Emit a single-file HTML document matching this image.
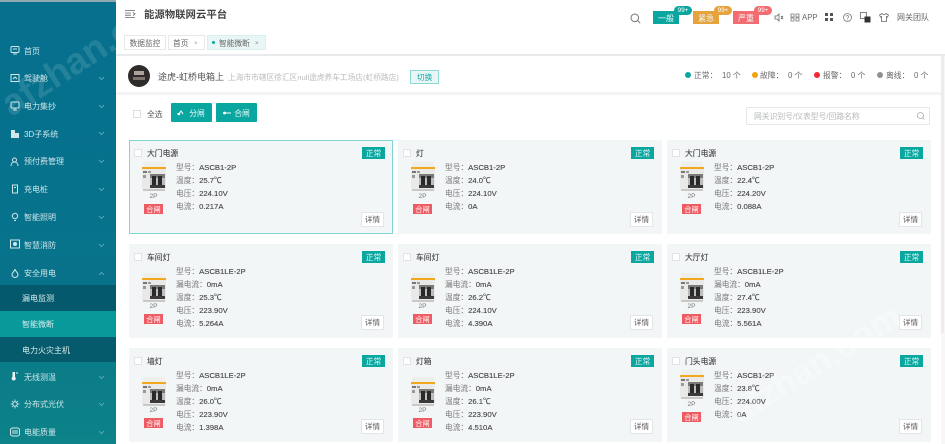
<!DOCTYPE html>
<html lang="zh"><head><meta charset="utf-8">
<style>
*{box-sizing:border-box;margin:0;padding:0}
html{background:#fff}
html,body{width:945px;height:444px;overflow:hidden;font-family:"Liberation Sans","Noto Sans CJK SC",sans-serif;color:#555}
body{background:#fff;filter:blur(.35px)}
.a{position:absolute;white-space:nowrap}
#side{position:absolute;left:0;top:0;width:116px;height:444px;background:linear-gradient(180deg,#06708e 0%,#07728c 50%,#0d8288 100%);overflow:hidden}
#side .m{position:absolute;left:24px;font-size:8px;color:#cfe6ea;white-space:nowrap;line-height:12px;margin-top:1px}
#side svg.i{position:absolute;left:10px;width:10px;height:10px}
#side svg.c{position:absolute;left:98px;width:7px;height:5px}
.band{position:absolute;left:0;width:116px}
.sub{position:absolute;left:22px;font-size:8px;color:#d8ecee;line-height:12px;white-space:nowrap;margin-top:1px}
.card{position:absolute;width:264px;background:#f2f6f7}
.card.sel{box-shadow:inset 0 0 0 1px #7fd6d2}
.ck{position:absolute;left:5px;top:9px;width:8px;height:8px;background:#fff;border:1px solid #dfe2e6;border-radius:1px}
.t{position:absolute;left:18px;top:8px;font-size:7.8px;color:#3f3f3f;line-height:12px;white-space:nowrap;-webkit-text-stroke:.1px #3f3f3f}
.st{position:absolute;left:233px;top:7px;width:23px;height:12px;background:#0aa7a0;color:#e6f7f6;font-size:7.8px;line-height:13px;text-align:center}
.img{position:absolute;left:13px;top:22px;width:24px;height:29px}
.img.r{top:29px;height:30px}
.p2{position:absolute;left:12px;width:25px;text-align:center;font-size:6.5px;color:#777;line-height:9px}
.he{position:absolute;left:15px;width:19px;height:10px;background:#ee5b62;color:#fff;font-size:7.2px;line-height:11px;text-align:center}
.l{position:absolute;left:47px;font-size:7.7px;line-height:12px;color:#444;white-space:nowrap;-webkit-text-stroke:.12px #444;margin-top:1px}
.l b{font-weight:400;color:#777;-webkit-text-stroke:0}
.d{position:absolute;left:232px;width:23px;height:15px;background:#fff;border:1px solid #e3e6e8;font-size:7.6px;line-height:13px;text-align:center;color:#555}
.wm{position:absolute;font-family:"Liberation Sans",sans-serif;font-weight:700;white-space:nowrap;transform-origin:left bottom;line-height:40px}
.dot{position:absolute;width:6px;height:6px;border-radius:50%;top:72px}
.s{position:absolute;top:70px;font-size:7.8px;line-height:12px;color:#666;white-space:nowrap}
.bd{position:absolute;top:11px;height:13px;width:26px;color:#f2fbfb;font-size:8px;line-height:15px;text-align:center}
.nn{position:absolute;top:6px;width:18px;height:9px;border-radius:5px;color:#fff;font-size:6.2px;line-height:9px;text-align:center}
.tb{position:absolute;top:35px;height:15px;border:1px solid #e6e8ea;font-size:7.7px;line-height:15px;color:#666;text-align:center;white-space:nowrap}
.gb{position:absolute;top:103px;width:41px;height:19px;background:#0aa7a0;color:#eafafa;font-size:7.8px;line-height:21px;text-align:center;border-radius:1px}
</style></head><body>
<svg width="0" height="0" style="position:absolute"><defs>
<symbol id="br" viewBox="0 0 24 29" preserveAspectRatio="none">
<rect x="1" y="0" width="22" height="5" fill="#eeeeeb"/>
<rect x="0" y="5" width="24" height="2" fill="#f2a81d"/>
<rect x="0" y="7" width="24" height="20" fill="#e9e9e7"/>
<rect x="1" y="9" width="4" height="2" fill="#777"/>
<rect x="6" y="9" width="3" height="2" fill="#999"/>
<rect x="1" y="13" width="3" height="3" fill="#999"/>
<rect x="8" y="12" width="15" height="4" fill="#7a7a7a"/>
<rect x="8" y="16" width="15" height="7" fill="#bdbdbd"/>
<rect x="10" y="14" width="4" height="9" fill="#2a2a2a"/>
<rect x="16" y="14" width="4" height="9" fill="#2a2a2a"/>
<rect x="8" y="23" width="15" height="3" fill="#3a3a3a"/>
<rect x="1" y="27" width="22" height="2" fill="#c8c8c6"/>
</symbol>
<symbol id="chd" viewBox="0 0 7 5"><path d="M1 1l2.500 2.500L6 1" fill="none" stroke="#6fb0bf" stroke-width=".8"/></symbol>
</defs></svg>

<div id="side">
<div class="band" style="top:0;height:2px;background:#8fa9b0"></div>
<div class="band" style="top:258px;height:27px;background:#077289"></div>
<div class="band" style="top:285px;height:26px;background:#05596c"></div>
<div class="band" style="top:311px;height:26px;background:#089a9b"></div>
<div class="band" style="top:337px;height:25px;background:#055b6b"></div>

<svg class="i" style="top:45px" viewBox="0 0 10 10"><rect x="1" y="1.500" width="8" height="6" rx="1" fill="none" stroke="#cfe6ea"/><path d="M3 4h4M3 9h4" stroke="#cfe6ea"/></svg><div class="m" style="top:45px">首页</div>
<svg class="i" style="top:73px" viewBox="0 0 10 10"><rect x="1" y="1.500" width="8" height="7" fill="none" stroke="#cfe6ea"/><path d="M3 6l2-2 2 2" fill="none" stroke="#cfe6ea"/></svg><div class="m" style="top:72px">驾驶舱</div><svg class="c" style="top:76px"><use href="#chd"/></svg>
<svg class="i" style="top:101px" viewBox="0 0 10 10"><rect x="1" y="1" width="8" height="6" rx="1" fill="none" stroke="#cfe6ea"/><path d="M3 9h4M5 7v2" stroke="#cfe6ea"/></svg><div class="m" style="top:100px">电力集抄</div><svg class="c" style="top:104px"><use href="#chd"/></svg>
<svg class="i" style="top:129px" viewBox="0 0 10 10"><path d="M1 9V1h4v8zM5 9V4h4v5z" fill="#cfe6ea"/></svg><div class="m" style="top:128px">3D子系统</div><svg class="c" style="top:131px"><use href="#chd"/></svg>
<svg class="i" style="top:157px" viewBox="0 0 10 10"><circle cx="4.500" cy="3" r="2" fill="none" stroke="#cfe6ea"/><path d="M1 9c0-3 2-4 3.500-4S8 6 8 9" fill="none" stroke="#cfe6ea"/></svg><div class="m" style="top:155px">预付费管理</div><svg class="c" style="top:159px"><use href="#chd"/></svg>
<svg class="i" style="top:184px" viewBox="0 0 10 10"><rect x="2.500" y="1" width="5" height="8" fill="none" stroke="#cfe6ea"/><path d="M4 3.500h2" stroke="#cfe6ea"/></svg><div class="m" style="top:183px">充电桩</div><svg class="c" style="top:187px"><use href="#chd"/></svg>
<svg class="i" style="top:212px" viewBox="0 0 10 10"><circle cx="5" cy="4" r="2.700" fill="none" stroke="#cfe6ea"/><path d="M4 8.500h2" stroke="#cfe6ea"/></svg><div class="m" style="top:211px">智能照明</div><svg class="c" style="top:215px"><use href="#chd"/></svg>
<svg class="i" style="top:239px" viewBox="0 0 10 10"><rect x=".5" y="1" width="9" height="8" fill="none" stroke="#cfe6ea"/><circle cx="5" cy="5" r="2" fill="#cfe6ea"/></svg><div class="m" style="top:239px">智慧消防</div><svg class="c" style="top:243px"><use href="#chd"/></svg>
<svg class="i" style="top:268px" viewBox="0 0 10 10"><path d="M5 1C5 3 2 4.500 2 6.500a3 3 0 006 0C8 4.500 5 3 5 1z" fill="none" stroke="#cfe6ea"/></svg><div class="m" style="top:267px">安全用电</div><svg class="c" style="top:271px;transform:scaleY(-1)"><use href="#chd"/></svg>
<div class="sub" style="top:292px">漏电监测</div>
<div class="sub" style="top:318px">智能微断</div>
<div class="sub" style="top:344px">电力火灾主机</div>
<svg class="i" style="top:371px" viewBox="0 0 10 10"><rect x="2.500" y="1" width="2.500" height="6" fill="#e8f4f4"/><circle cx="3.700" cy="7.500" r="2" fill="#e8f4f4"/><path d="M6 2h2" stroke="#e8f4f4"/></svg><div class="m" style="top:371px">无线测温</div><svg class="c" style="top:375px"><use href="#chd"/></svg>
<svg class="i" style="top:399px" viewBox="0 0 10 10"><circle cx="5" cy="5" r="2.200" fill="none" stroke="#cfe6ea"/><path d="M5 .5v2M5 7.500v2M.5 5h2M7.500 5h2M2 2l1.400 1.400M6.600 6.600L8 8M8 2L6.600 3.400M3.400 6.600L2 8" stroke="#cfe6ea" stroke-width=".8"/></svg><div class="m" style="top:398px">分布式光伏</div><svg class="c" style="top:402px"><use href="#chd"/></svg>
<svg class="i" style="top:427px" viewBox="0 0 10 10"><rect x=".5" y="1" width="9" height="8" rx="2" fill="none" stroke="#cfe6ea"/><path d="M3 3v4M5 3v4M7 3v4" stroke="#cfe6ea"/></svg><div class="m" style="top:426px">电能质量</div><svg class="c" style="top:430px"><use href="#chd"/></svg>
<div class="wm" style="left:16px;top:84px;font-size:37px;color:rgba(255,255,255,.12);transform:rotate(-33deg)">afzhan.com</div>
</div>

<!-- top bar -->
<svg class="a" style="left:125px;top:10px;width:11px;height:8px" viewBox="0 0 11 8"><path d="M0 .5h10M0 3h6M0 5.200h6M0 7.500h10M8 2.500l2 1.500-2 1.500" fill="none" stroke="#666" stroke-width=".8"/></svg>
<div class="a" style="left:144px;top:9px;font-size:10.400px;line-height:14px;color:#444;font-weight:700">能源物联网云平台</div>

<svg class="a" style="left:630px;top:13px;width:11px;height:11px" viewBox="0 0 11 11"><circle cx="4.800" cy="4.800" r="3.800" fill="none" stroke="#777"/><path d="M7.700 7.700L10.200 10.200" stroke="#777"/></svg>
<div class="bd" style="left:653px;background:#0aa7a0">一般</div><div class="nn" style="left:674px;background:#0aa7a0">99+</div>
<div class="bd" style="left:693px;background:#e6a23c">紧急</div><div class="nn" style="left:714px;background:#e6a23c">99+</div>
<div class="bd" style="left:733px;background:#f26c72">严重</div><div class="nn" style="left:754px;background:#f26c72">99+</div>
<svg class="a" style="left:774px;top:13px;width:10px;height:9px" viewBox="0 0 10 9"><path d="M1 3h2l2-2v7L3 6H1zM7 3l2 3M9 3L7 6" fill="none" stroke="#666" stroke-width=".8"/></svg>
<svg class="a" style="left:790px;top:13px;width:10px;height:9px" viewBox="0 0 10 9"><path d="M1 1h3v3H1zM6 1h3v3H6zM1 5h3v3H1zM6 5h3v3H6z" fill="none" stroke="#777" stroke-width=".8"/></svg>
<div class="a" style="left:802px;top:12px;font-size:7.800px;line-height:12px;color:#666">APP</div>
<svg class="a" style="left:825px;top:13px;width:8px;height:8px" viewBox="0 0 8 8"><path d="M0 0h3v3H0zM5 0h3v3H5zM0 5h3v3H0zM5 5h3v3H5z" fill="#555"/></svg>
<svg class="a" style="left:843px;top:13px;width:9px;height:9px" viewBox="0 0 9 9"><circle cx="4.500" cy="4.500" r="4" fill="none" stroke="#777" stroke-width=".8"/><path d="M3.300 3.500a1.200 1.200 0 112 1c-.5.300-.8.500-.8 1.200M4.500 6.500v.8" fill="none" stroke="#777" stroke-width=".7"/></svg>
<svg class="a" style="left:860px;top:12px;width:11px;height:11px" viewBox="0 0 11 11"><rect x=".5" y=".5" width="6" height="6" fill="#fff" stroke="#666" stroke-width=".8"/><rect x="4.500" y="4.500" width="6" height="6" fill="#333"/></svg>
<svg class="a" style="left:879px;top:13px;width:10px;height:9px" viewBox="0 0 10 9"><path d="M3 .5L.5 2l1 2L2.500 3.500V8.500h5V3.500L8.500 4l1-2L7 .5C6.500 1.800 3.500 1.800 3 .5z" fill="none" stroke="#666" stroke-width=".8"/></svg>
<div class="a" style="left:897px;top:12px;font-size:8px;line-height:12px;color:#666">网关团队</div>

<div class="tb" style="left:124px;width:42px">数据监控</div>
<div class="tb" style="left:168px;width:37px;text-align:left;padding-left:4px">首页<span style="position:absolute;left:25px;top:1px;font-size:6px;color:#999">×</span></div>
<div class="tb" style="left:207px;width:59px;background:#e8f6f6;border-color:#d8f0ef;text-align:left;padding-left:11px">智能微断<span style="position:absolute;left:47px;top:1px;font-size:6px;color:#888">×</span><span style="position:absolute;left:4px;top:5px;width:3px;height:3px;border-radius:50%;background:#0aa7a0"></span></div>

<!-- content bg strips -->
<div class="a" style="left:116px;top:54px;width:829px;height:2px;background:#e9eaeb"></div>
<div class="a" style="left:116px;top:92px;width:829px;height:3px;background:#f3f4f5"></div>
<div class="a" style="left:941px;top:56px;width:4px;height:388px;background:#f7f7f7"></div>
<div class="a" style="left:941px;top:56px;width:3px;height:277px;background:#ececec"></div>

<!-- info row -->
<svg class="a" style="left:128px;top:65px;width:22px;height:22px" viewBox="0 0 22 22"><circle cx="11" cy="11" r="11" fill="#2f2b2a"/><rect x="6" y="6" width="10" height="4" fill="#aaa49c"/><rect x="5" y="12" width="12" height="3" fill="#7d756c"/></svg>
<div class="a" style="left:158px;top:71px;font-size:9px;line-height:13px;color:#555">途虎-虹桥电箱上</div>
<div class="a" style="left:228px;top:71px;font-size:7.700px;line-height:13px;color:#bbb">上海市市辖区徐汇区null途虎养车工场店(虹桥路店)</div>
<div class="a" style="left:410px;top:70px;width:29px;height:14px;background:#e8f6f6;border:1px solid #8fd9d5;color:#1ba9a3;font-size:7.800px;line-height:13px;text-align:center">切换</div>

<div class="dot" style="left:685px;background:#0aa7a0"></div><div class="s" style="left:694px">正常：</div><div class="s" style="left:722px">10 个</div>
<div class="dot" style="left:752px;background:#f0a30a"></div><div class="s" style="left:760px">故障：</div><div class="s" style="left:788px">0 个</div>
<div class="dot" style="left:814px;background:#ee2a35"></div><div class="s" style="left:823px">报警：</div><div class="s" style="left:851px">0 个</div>
<div class="dot" style="left:877px;background:#8f9090"></div><div class="s" style="left:886px">离线：</div><div class="s" style="left:914px">0 个</div>

<!-- toolbar -->
<div class="a" style="left:133px;top:110px;width:8px;height:8px;background:#fff;border:1px solid #dcdfe6"></div>
<div class="a" style="left:147px;top:109px;font-size:7.800px;line-height:12px;color:#555">全选</div>
<div class="gb" style="left:171px;padding-left:11px">分闸<svg style="position:absolute;left:6px;top:7px;width:9px;height:6px" viewBox="0 0 9 6"><path d="M0 4h2l2-3 2 3" fill="none" stroke="#fff"/><circle cx="2" cy="4" r="1.200" fill="#fff"/></svg></div>
<div class="gb" style="left:216px;padding-left:11px">合闸<svg style="position:absolute;left:6px;top:7px;width:9px;height:6px" viewBox="0 0 9 6"><path d="M1 3h8" stroke="#fff"/><circle cx="2.500" cy="3" r="1.400" fill="#fff"/></svg></div>
<div class="a" style="left:746px;top:107px;width:184px;height:18px;border:1px solid #e5e7e9;border-radius:1px;background:#fff"></div>
<div class="a" style="left:754px;top:111px;font-size:7.800px;line-height:12px;color:#b5b8bb">网关识别号/仪表型号/回路名称</div>
<svg class="a" style="left:917px;top:112px;width:8px;height:8px" viewBox="0 0 8 8"><circle cx="3.500" cy="3.500" r="3" fill="none" stroke="#aaa" stroke-width=".8"/><path d="M5.700 5.700L7.500 7.500" stroke="#aaa" stroke-width=".8"/></svg>

<!-- row 1 -->
<div class="card sel" style="left:129px;top:140px;height:94px">
<div class="ck"></div><div class="t">大门电源</div><div class="st">正常</div>
<svg class="img"><use href="#br" width="24" height="29"/></svg><div class="p2" style="top:52px">2P</div><div class="he" style="top:64px">合闸</div>
<div class="l" style="top:21px"><b>型号：</b>ASCB1-2P</div><div class="l" style="top:34px"><b>温度：</b>25.7℃</div><div class="l" style="top:47px"><b>电压：</b>224.10V</div><div class="l" style="top:60px"><b>电流：</b>0.217A</div>
<div class="d" style="top:72px">详情</div></div>

<div class="card" style="left:398px;top:140px;height:94px">
<div class="ck"></div><div class="t">灯</div><div class="st">正常</div>
<svg class="img"><use href="#br" width="24" height="29"/></svg><div class="p2" style="top:52px">2P</div><div class="he" style="top:64px">合闸</div>
<div class="l" style="top:21px"><b>型号：</b>ASCB1-2P</div><div class="l" style="top:34px"><b>温度：</b>24.0℃</div><div class="l" style="top:47px"><b>电压：</b>224.10V</div><div class="l" style="top:60px"><b>电流：</b>0A</div>
<div class="d" style="top:72px">详情</div></div>

<div class="card" style="left:667px;top:140px;height:94px">
<div class="ck"></div><div class="t">大门电源</div><div class="st">正常</div>
<svg class="img"><use href="#br" width="24" height="29"/></svg><div class="p2" style="top:52px">2P</div><div class="he" style="top:64px">合闸</div>
<div class="l" style="top:21px"><b>型号：</b>ASCB1-2P</div><div class="l" style="top:34px"><b>温度：</b>22.4℃</div><div class="l" style="top:47px"><b>电压：</b>224.20V</div><div class="l" style="top:60px"><b>电流：</b>0.088A</div>
<div class="d" style="top:72px">详情</div></div>

<!-- row 2 -->
<div class="card" style="left:129px;top:244px;height:94px">
<div class="ck"></div><div class="t">车间灯</div><div class="st">正常</div>
<svg class="img r"><use href="#br" width="24" height="29"/></svg><div class="p2" style="top:58px">2P</div><div class="he" style="top:70px">合闸</div>
<div class="l" style="top:21px"><b>型号：</b>ASCB1LE-2P</div><div class="l" style="top:34px"><b>漏电流：</b>0mA</div><div class="l" style="top:47px"><b>温度：</b>25.3℃</div><div class="l" style="top:60px"><b>电压：</b>223.90V</div><div class="l" style="top:73px"><b>电流：</b>5.264A</div>
<div class="d" style="top:71px">详情</div></div>

<div class="card" style="left:398px;top:244px;height:94px">
<div class="ck"></div><div class="t">车间灯</div><div class="st">正常</div>
<svg class="img r"><use href="#br" width="24" height="29"/></svg><div class="p2" style="top:58px">2P</div><div class="he" style="top:70px">合闸</div>
<div class="l" style="top:21px"><b>型号：</b>ASCB1LE-2P</div><div class="l" style="top:34px"><b>漏电流：</b>0mA</div><div class="l" style="top:47px"><b>温度：</b>26.2℃</div><div class="l" style="top:60px"><b>电压：</b>224.10V</div><div class="l" style="top:73px"><b>电流：</b>4.390A</div>
<div class="d" style="top:71px">详情</div></div>

<div class="card" style="left:667px;top:244px;height:94px">
<div class="ck"></div><div class="t">大厅灯</div><div class="st">正常</div>
<svg class="img r"><use href="#br" width="24" height="29"/></svg><div class="p2" style="top:58px">2P</div><div class="he" style="top:70px">合闸</div>
<div class="l" style="top:21px"><b>型号：</b>ASCB1LE-2P</div><div class="l" style="top:34px"><b>漏电流：</b>0mA</div><div class="l" style="top:47px"><b>温度：</b>27.4℃</div><div class="l" style="top:60px"><b>电压：</b>223.90V</div><div class="l" style="top:73px"><b>电流：</b>5.561A</div>
<div class="d" style="top:71px">详情</div></div>

<!-- row 3 -->
<div class="card" style="left:129px;top:348px;height:94px">
<div class="ck"></div><div class="t">墙灯</div><div class="st">正常</div>
<svg class="img r"><use href="#br" width="24" height="29"/></svg><div class="p2" style="top:58px">2P</div><div class="he" style="top:70px">合闸</div>
<div class="l" style="top:21px"><b>型号：</b>ASCB1LE-2P</div><div class="l" style="top:34px"><b>漏电流：</b>0mA</div><div class="l" style="top:47px"><b>温度：</b>26.0℃</div><div class="l" style="top:60px"><b>电压：</b>223.90V</div><div class="l" style="top:73px"><b>电流：</b>1.398A</div>
<div class="d" style="top:71px">详情</div></div>

<div class="card" style="left:398px;top:348px;height:94px">
<div class="ck"></div><div class="t">灯箱</div><div class="st">正常</div>
<svg class="img r"><use href="#br" width="24" height="29"/></svg><div class="p2" style="top:58px">2P</div><div class="he" style="top:70px">合闸</div>
<div class="l" style="top:21px"><b>型号：</b>ASCB1LE-2P</div><div class="l" style="top:34px"><b>漏电流：</b>0mA</div><div class="l" style="top:47px"><b>温度：</b>26.1℃</div><div class="l" style="top:60px"><b>电压：</b>223.90V</div><div class="l" style="top:73px"><b>电流：</b>4.510A</div>
<div class="d" style="top:71px">详情</div></div>

<div class="card" style="left:667px;top:348px;height:94px">
<div class="ck"></div><div class="t">门头电源</div><div class="st">正常</div>
<svg class="img"><use href="#br" width="24" height="29"/></svg><div class="p2" style="top:52px">2P</div><div class="he" style="top:64px">合闸</div>
<div class="l" style="top:21px"><b>型号：</b>ASCB1-2P</div><div class="l" style="top:34px"><b>温度：</b>23.8℃</div><div class="l" style="top:47px"><b>电压：</b>224.00V</div><div class="l" style="top:60px"><b>电流：</b>0A</div>
<div class="d" style="top:71px">详情</div></div>

<div class="wm" style="left:745px;top:392px;font-size:35px;color:rgba(255,255,255,.3);transform:rotate(-32deg)">afzhan.com</div>
</body></html>
